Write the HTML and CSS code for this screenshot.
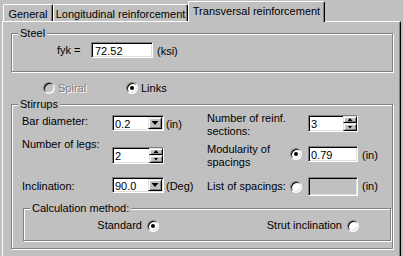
FILE: index.html
```html
<!DOCTYPE html>
<html lang="en">
<head>
  <meta charset="UTF-8">
  <title>Transversal reinforcement</title>
  <link rel="stylesheet" href="styles.css">
</head>
<body>

  <!-- Tab strip -->
  <div class="tabs">
    <div class="tab tab-general">General</div>
    <div class="tab tab-long">Longitudinal reinforcement</div>
    <div class="tab tab-trans active">Transversal reinforcement</div>
  </div>

  <div class="panel">

    <div class="group steel">
      <span class="group-title">Steel</span>
      <div class="fyk-row">
        <span class="fyk-label">fyk =</span>
        <div class="sunken edit fyk">72.52</div>
        <span class="unit">(ksi)</span>
      </div>
    </div>

    <div class="mode">
      <div class="option disabled spiral"><span class="radio"></span>Spiral</div>
      <div class="option"><span class="radio checked"></span>Links</div>
    </div>

    <div class="group stirrups">
      <span class="group-title">Stirrups</span>

      <div class="stirrup-grid">
        <!-- row 1 -->
        <span class="lbl">Bar diameter:</span>
        <div class="sunken combo">
          <span class="combo-text">0.2</span>
          <span class="raised combo-btn"><i class="arrow-down"></i></span>
        </div>
        <span class="unit">(in)</span>
        <span class="lbl lbl-right span2">Number of reinf.<br>sections:</span>
        <div class="sunken spin spin-right">
          <span class="spin-text">3</span>
          <span class="spin-btns">
            <span class="raised spin-btn up"><i class="arrow-up-sm"></i></span>
            <span class="raised spin-btn"><i class="arrow-down-sm"></i></span>
          </span>
        </div>

        <!-- row 2 -->
        <span class="lbl c1 lbl-legs">Number of legs:</span>
        <div class="sunken spin spin-legs">
          <span class="spin-text">2</span>
          <span class="spin-btns">
            <span class="raised spin-btn up"><i class="arrow-up-sm"></i></span>
            <span class="raised spin-btn"><i class="arrow-down-sm"></i></span>
          </span>
        </div>
        <span class="lbl lbl-right c4">Modularity of<br>spacings</span>
        <span class="radio checked radio-mod"></span>
        <div class="sunken edit edit-right">0.79</div>
        <span class="unit unit-right">(in)</span>

        <!-- row 3 -->
        <span class="lbl c1 lbl-low">Inclination:</span>
        <div class="sunken combo">
          <span class="combo-text">90.0</span>
          <span class="raised combo-btn"><i class="arrow-down"></i></span>
        </div>
        <span class="unit">(Deg)</span>
        <span class="lbl lbl-low">List of spacings:</span>
        <span class="radio radio-list"></span>
        <div class="sunken edit edit-right edit-off"></div>
        <span class="unit unit-right">(in)</span>
      </div>

      <div class="group calc">
        <span class="group-title">Calculation method:</span>
        <div class="calc-row">
          <div class="option option-left">Standard<span class="radio checked"></span></div>
          <div class="option option-left">Strut inclination<span class="radio"></span></div>
        </div>
      </div>
    </div>

  </div>

</body>
</html>
```

FILE: styles.css
```css
html, body {
  margin: 0;
  padding: 0;
}

body {
  width: 403px;
  height: 256px;
  overflow: hidden;
  background: #c0c0c0;
  color: #000;
  font-family: "Liberation Sans", Arial, sans-serif;
  font-size: 11px;
  line-height: 13px;
}

/* ---- shared 3D looks ---- */

.sunken {
  box-sizing: border-box;
  background: #fff;
  border: 1px solid;
  border-color: #808080 #fff #fff #808080;
  box-shadow: inset 1px 1px #000, inset -1px -1px #dfdfdf;
}

.raised {
  box-sizing: border-box;
  background: #c0c0c0;
  border: 1px solid;
  border-color: #dfdfdf #000 #000 #dfdfdf;
  box-shadow: inset 1px 1px #fff, inset -1px -1px #808080;
}

/* ---- tabs ---- */

.tabs {
  position: relative;
  z-index: 1;
  display: flex;
  align-items: flex-end;
  height: 21px;
  padding-left: 3px;
}

.tab {
  box-sizing: border-box;
  height: 17px;
  padding-top: 3px;
  text-align: center;
  white-space: nowrap;
  border-top: 1px solid #fff;
  border-left: 1px solid #fff;
  border-right: 1px solid #000;
  border-radius: 2px 2px 0 0;
  box-shadow: inset -1px 0 #808080;
}

.tab-general { width: 50px; }
.tab-long { width: 135px; }

.tab.active {
  width: 137px;
  height: 21px;
  margin-bottom: -1px;
  background: #c0c0c0;
}

/* ---- panel ---- */

.panel {
  box-sizing: border-box;
  width: 399px;
  height: 235px;
  margin-left: 2px;
  border-top: 1px solid #fff;
  border-left: 1px solid #fff;
  border-right: 1px solid #000;
  box-shadow: inset -1px 0 #808080;
  overflow: hidden;
}

.group {
  position: relative;
  box-sizing: border-box;
  border: 1px solid #808080;
  box-shadow: inset 1px 1px #fff, 1px 1px #fff;
}

.group-title {
  position: absolute;
  top: -7px;
  left: 6px;
  padding: 0 2px;
  background: #c0c0c0;
  white-space: nowrap;
}

.unit {
  margin-left: 2px;
  padding-top: 3px;
  white-space: nowrap;
}

/* ---- steel ---- */

.steel {
  width: 382px;
  height: 39px;
  margin: 11px 0 0 8px;
  padding: 8px 0 0 45px;
}

.fyk-row {
  display: flex;
  align-items: flex-start;
}

.fyk-label {
  width: 34px;
  margin-top: 2px;
}

.edit {
  height: 16px;
  padding: 2px 0 0 2px;
}

.fyk {
  width: 62px;
  padding-left: 3px;
}

.fyk-row .unit {
  margin-left: 4px;
}

/* ---- radio buttons ---- */

.radio {
  display: flex;
  align-items: center;
  justify-content: center;
  box-sizing: border-box;
  width: 12px;
  height: 12px;
  flex: none;
  border-radius: 50%;
  background: #fff;
  border: 1px solid;
  border-color: #808080 #fff #fff #808080;
  box-shadow: inset 1px 1px #000, inset -1px -1px #dfdfdf;
}

.radio.checked::after {
  content: "";
  width: 4px;
  height: 4px;
  border-radius: 50%;
  background: #000;
}

.option {
  display: flex;
  align-items: center;
  gap: 3px;
  white-space: nowrap;
}

.option.disabled {
  color: #808080;
  text-shadow: 1px 1px #fff;
}

.option.disabled .radio {
  background: #c0c0c0;
}

.mode {
  display: flex;
  height: 12px;
  margin: 10px 0 10px 40px;
}

.spiral {
  width: 83px;
}

/* ---- stirrups ---- */

.stirrups {
  width: 382px;
  height: 145px;
  margin-left: 8px;
  padding: 10px 0 0 10px;
}

.stirrup-grid {
  display: grid;
  grid-template-columns: 90px 52px 43px 83px 18px 50px auto;
  grid-template-rows: 31px 31px 19px;
  align-items: start;
}

.lbl {
  white-space: nowrap;
}

.c1 { grid-column: 1; }
.c4 { grid-column: 4; }
.span2 { grid-column: span 2; }

.lbl-right { margin-top: -3px; }
.lbl-legs { margin-top: -8px; }
.lbl-low { margin-top: 3px; }

.combo {
  display: flex;
  height: 16px;
  padding: 1px;
}

.combo-text {
  flex: 1;
  padding: 1px 0 0 1px;
}

.combo-btn {
  display: flex;
  align-items: center;
  justify-content: center;
  width: 14px;
  height: 12px;
}

.arrow-down {
  width: 7px;
  height: 4px;
  background: #000;
  clip-path: polygon(0 0, 100% 0, 50% 100%);
}

.spin {
  display: flex;
  height: 17px;
}

.spin-legs {
  margin-top: 1px;
}

.spin-text {
  flex: 1;
  padding: 2px 0 0 2px;
}

.spin-btns {
  display: flex;
  flex-direction: column;
  width: 14px;
}

.spin-btn {
  display: flex;
  align-items: center;
  justify-content: center;
  flex: 1;
}

.spin-btn.up {
  flex: none;
  height: 7px;
}

.arrow-up-sm,
.arrow-down-sm {
  width: 5px;
  height: 3px;
  background: #000;
}

.arrow-up-sm { clip-path: polygon(50% 0, 100% 100%, 0 100%); }
.arrow-down-sm { clip-path: polygon(0 0, 100% 0, 50% 100%); }

.radio-mod { margin-top: 2px; }
.radio-list { margin-top: 4px; }

.edit-off {
  height: 19px;
  background: #c0c0c0;
}

.unit-right {
  margin-left: 4px;
}

/* ---- calculation method ---- */

.calc {
  width: 368px;
  height: 33px;
  margin: 12px 0 0 1px;
  padding-top: 10px;
}

.calc-row {
  display: grid;
  grid-template-columns: 135px 200px;
}

.option-left {
  justify-content: flex-end;
  gap: 5px;
}
```
